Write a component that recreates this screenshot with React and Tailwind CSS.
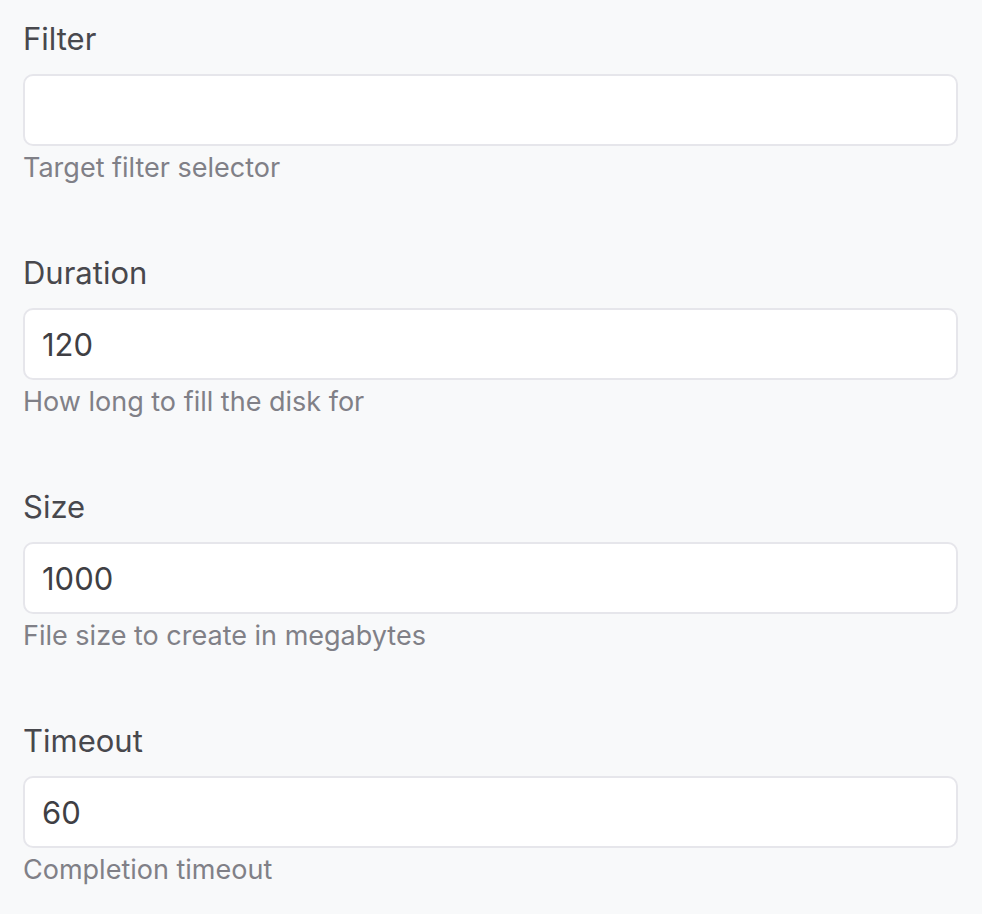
import React from 'react';

const fields = [
  { label: 'Filter', value: '', help: 'Target filter selector' },
  { label: 'Duration', value: '120', help: 'How long to fill the disk for' },
  { label: 'Size', value: '1000', help: 'File size to create in megabytes' },
  { label: 'Timeout', value: '60', help: 'Completion timeout' },
];

const App = () => {
  return (
    <div className="min-h-screen bg-[#f8f9fa] pl-[23px] pr-[24px] pt-[19px] font-['Inter',sans-serif]">
      {fields.map((f) => (
        <div key={f.label} className="mb-[69px]">
          <label className="block text-[31px] leading-[40px] text-[#48484d] mb-[15px]">{f.label}</label>
          <input
            type="text"
            defaultValue={f.value}
            className="block w-full h-[72px] px-[17px] bg-white border-2 border-[#e6e6eb] rounded-[10px] text-[31px] text-[#3f3f44] outline-none"
          />
          <p className="mt-[6px] text-[27px] leading-[32px] text-[#808087]">{f.help}</p>
        </div>
      ))}
    </div>
  );
};

export default App;
